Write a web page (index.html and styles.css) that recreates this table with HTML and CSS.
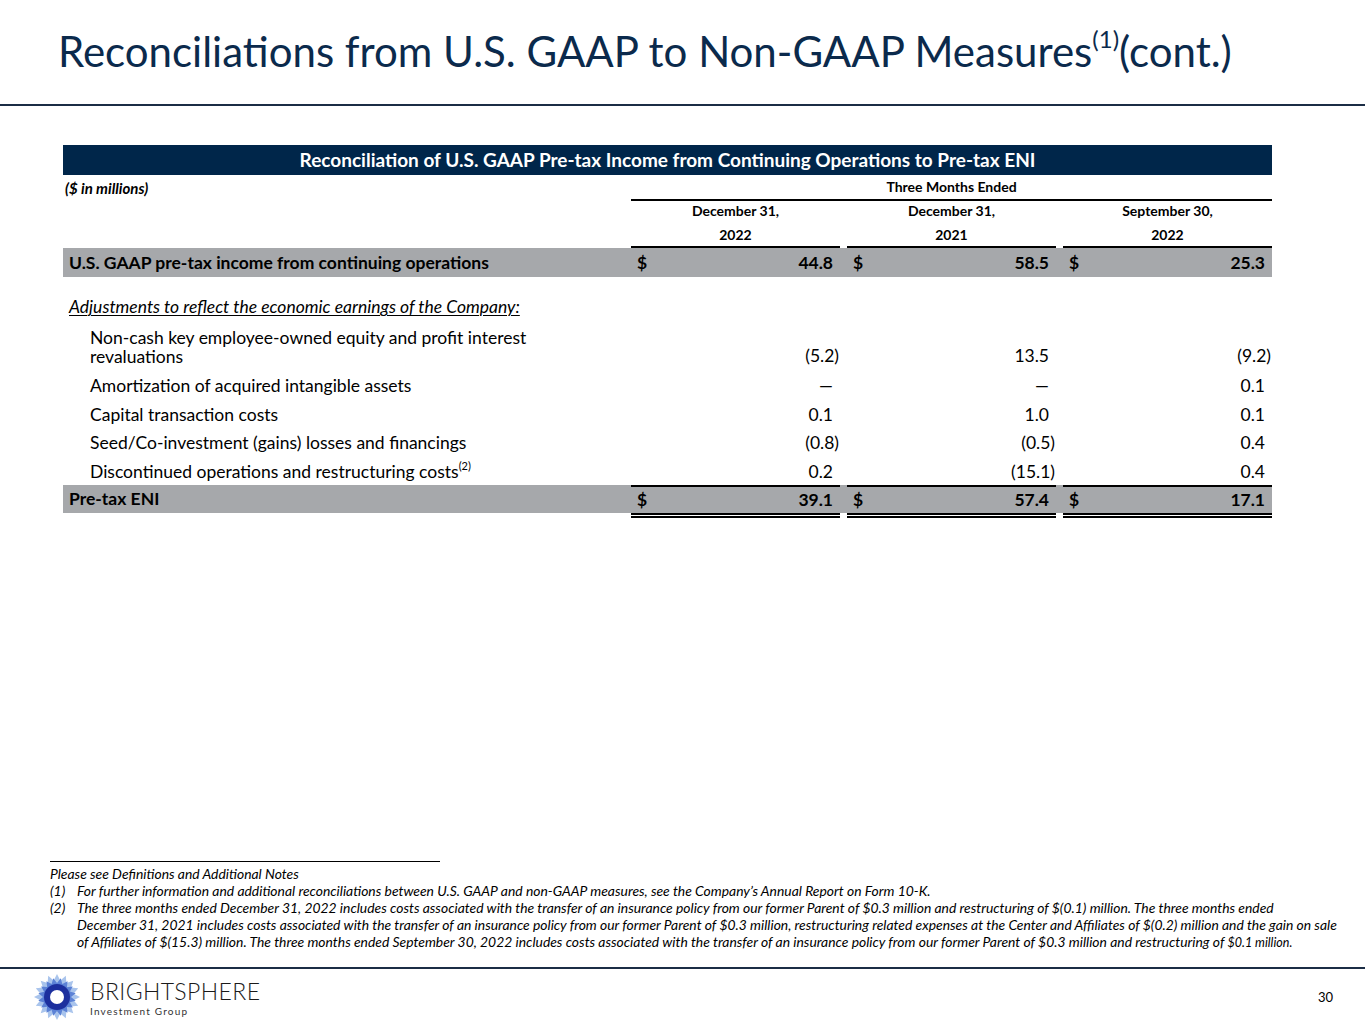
FILE: index.html
```html
<!DOCTYPE html>
<html lang="en">
<head>
<meta charset="utf-8">
<title>Reconciliations from U.S. GAAP to Non-GAAP Measures</title>
<link rel="stylesheet" href="styles.css">
</head>
<body>
<div class="page">
  <header class="title-bar">
    <h1 class="title">Reconciliations from U.S. GAAP to Non-GAAP Measures<sup class="title-sup">(1)</sup>(cont.)</h1>
  </header>

  <section class="recon">
    <div class="recon-head">Reconciliation of U.S. GAAP Pre-tax Income from Continuing Operations to Pre-tax ENI</div>

    <div class="row row-units">
      <div class="units">($ in millions)</div>
      <div class="span3">Three Months Ended</div>
    </div>
    <div class="row row-colhead">
      <div></div>
      <div class="colhead">December 31,</div>
      <div class="colhead">December 31,</div>
      <div class="colhead">September 30,</div>
    </div>
    <div class="row row-colyear">
      <div></div>
      <div class="colyear">2022</div>
      <div class="colyear">2021</div>
      <div class="colyear">2022</div>
    </div>

    <div class="row row-total">
      <div class="label">U.S. GAAP pre-tax income from continuing operations</div>
      <div class="val"><span class="cur">$</span><span class="num">44.8</span></div>
      <div class="val"><span class="cur">$</span><span class="num">58.5</span></div>
      <div class="val"><span class="cur">$</span><span class="num">25.3</span></div>
    </div>

    <div class="row row-sub">
      <div class="label adj">Adjustments to reflect the economic earnings of the Company:</div>
    </div>

    <div class="row row-item row-tall">
      <div class="label indent">Non-cash key employee-owned equity and profit interest<br>revaluations</div>
      <div class="val"><span class="num neg">(5.2)</span></div>
      <div class="val"><span class="num">13.5</span></div>
      <div class="val"><span class="num neg">(9.2)</span></div>
    </div>
    <div class="row row-item">
      <div class="label indent">Amortization of acquired intangible assets</div>
      <div class="val"><span class="num">—</span></div>
      <div class="val"><span class="num">—</span></div>
      <div class="val"><span class="num">0.1</span></div>
    </div>
    <div class="row row-item">
      <div class="label indent">Capital transaction costs</div>
      <div class="val"><span class="num">0.1</span></div>
      <div class="val"><span class="num">1.0</span></div>
      <div class="val"><span class="num">0.1</span></div>
    </div>
    <div class="row row-item">
      <div class="label indent">Seed/Co-investment (gains) losses and financings</div>
      <div class="val"><span class="num neg">(0.8)</span></div>
      <div class="val"><span class="num neg">(0.5)</span></div>
      <div class="val"><span class="num">0.4</span></div>
    </div>
    <div class="row row-item">
      <div class="label indent">Discontinued operations and restructuring costs<sup class="fn-sup">(2)</sup></div>
      <div class="val"><span class="num">0.2</span></div>
      <div class="val"><span class="num neg">(15.1)</span></div>
      <div class="val"><span class="num">0.4</span></div>
    </div>

    <div class="row row-total row-final">
      <div class="label">Pre-tax ENI</div>
      <div class="val"><span class="cur">$</span><span class="num">39.1</span></div>
      <div class="val"><span class="cur">$</span><span class="num">57.4</span></div>
      <div class="val"><span class="cur">$</span><span class="num">17.1</span></div>
    </div>
  </section>

  <section class="notes">
    <div class="notes-rule"></div>
    <p class="note-line">Please see Definitions and Additional Notes</p>
    <div class="note">
      <span class="note-no">(1)</span>
      <span class="note-text">For further information and additional reconciliations between U.S. GAAP and non-GAAP measures, see the Company’s Annual Report on Form 10-K.</span>
    </div>
    <div class="note">
      <span class="note-no">(2)</span>
      <span class="note-text">The three months ended December 31, 2022 includes costs associated with the transfer of an insurance policy from our former Parent of $0.3 million and restructuring of $(0.1) million. The three months ended<br>December 31, 2021 includes costs associated with the transfer of an insurance policy from our former Parent of $0.3 million, restructuring related expenses at the Center and Affiliates of $(0.2) million and the gain on sale<br>of Affiliates of $(15.3) million. The three months ended September 30, 2022 includes costs associated with the transfer of an insurance policy from our former Parent of $0.3 million and restructuring of <span class="tiny">$0.1 million.</span></span>
    </div>
  </section>

  <footer class="footer">
    <div class="brand">
      <svg class="logo" width="46" height="46" viewBox="-23 -23 46 46" aria-hidden="true">
        <polygon fill="#a9c4ec" points="0,-23 3.3,-16.6 8.8,-21.2 9.4,-14.1 16.3,-16.3 14.1,-9.4 21.2,-8.8 16.6,-3.3 23,0 16.6,3.3 21.2,8.8 14.1,9.4 16.3,16.3 9.4,14.1 8.8,21.2 3.3,16.6 0,23 -3.3,16.6 -8.8,21.2 -9.4,14.1 -16.3,16.3 -14.1,9.4 -21.2,8.8 -16.6,3.3 -23,0 -16.6,-3.3 -21.2,-8.8 -14.1,-9.4 -16.3,-16.3 -9.4,-14.1 -8.8,-21.2 -3.3,-16.6"/>
        <polygon fill="#5c82d6" transform="rotate(11.25)" points="0,-19 2.7,-13.7 7.3,-17.6 7.8,-11.6 13.4,-13.4 11.6,-7.8 17.6,-7.3 13.7,-2.7 19,0 13.7,2.7 17.6,7.3 11.6,7.8 13.4,13.4 7.8,11.6 7.3,17.6 2.7,13.7 0,19 -2.7,13.7 -7.3,17.6 -7.8,11.6 -13.4,13.4 -11.6,7.8 -17.6,7.3 -13.7,2.7 -19,0 -13.7,-2.7 -17.6,-7.3 -11.6,-7.8 -13.4,-13.4 -7.8,-11.6 -7.3,-17.6 -2.7,-13.7"/>
        <circle r="13" fill="#1c2f9e"/>
        <circle r="7" fill="#ffffff"/>
      </svg>
      <div class="brand-text">
        <div class="brand-name">BRIGHTSPHERE</div>
        <div class="brand-sub">Investment Group</div>
      </div>
    </div>
    <div class="page-no">30</div>
  </footer>
</div>
</body>
</html>
```

FILE: styles.css
```css
html, body {
  margin: 0;
  padding: 0;
  background: #ffffff;
}

body {
  font-family: "Lato", "Open Sans", sans-serif;
  color: #000000;
}

.page {
  width: 1365px;
  height: 1024px;
  display: flex;
  flex-direction: column;
  overflow: hidden;
}

/* Title */
.title-bar {
  height: 104px;
  border-bottom: 2px solid #1b2d45;
  box-sizing: content-box;
}

.title {
  margin: 0;
  padding: 25px 0 0 58px;
  font-size: 42px;
  line-height: 52px;
  font-weight: 400;
  color: #0b2a4c;
  white-space: nowrap;
}

.title-sup {
  font-size: 24px;
  vertical-align: 0;
  position: relative;
  top: -19px;
  line-height: 0;
}

/* Reconciliation table */
.recon {
  margin: 39px 0 0 63px;
  width: 1209px;
}

.recon-head {
  height: 30px;
  background: #00264a;
  color: #ffffff;
  font-weight: 700;
  font-size: 19px;
  line-height: 30px;
  text-align: center;
}

.row {
  display: grid;
  grid-template-columns: 561px 209px 209px 209px;
  column-gap: 7px;
  align-items: center;
}

.row-units {
  height: 24px;
  font-size: 14px;
  font-weight: 700;
}

.units {
  font-style: italic;
  font-size: 15px;
  padding-left: 2px;
}

.span3 {
  grid-column: 2 / span 3;
  text-align: center;
  align-self: stretch;
  line-height: 24px;
  border-bottom: 2px solid #000000;
}

.row-colhead,
.row-colyear {
  height: 24px;
  font-size: 14px;
  font-weight: 700;
  text-align: center;
}

.row-colyear {
  height: 25px;
}

.colhead,
.colyear {
  align-self: stretch;
  line-height: 24px;
}

.colyear {
  border-bottom: 2px solid #000000;
  line-height: 23px;
}

.row-total {
  height: 29px;
  background: #a6a8ab;
  font-weight: 700;
  font-size: 17.5px;
}

.row-total .label {
  padding-left: 6px;
}

.val {
  display: flex;
  justify-content: space-between;
  align-items: center;
  padding: 0 7px 0 6px;
  font-size: 17.5px;
}

.row-item .val {
  justify-content: flex-end;
}

.neg {
  margin-right: -6px;
}

.row-sub {
  height: 29px;
  margin-top: 15px;
  font-size: 17.5px;
}

.adj {
  font-style: italic;
  text-decoration: underline;
  text-decoration-thickness: 1px;
  text-underline-offset: 2px;
  padding-left: 6px;
}

.row-item {
  height: 28.5px;
  font-size: 17.5px;
}

.row-tall {
  height: 49px;
  align-items: end;
  padding-bottom: 4px;
  box-sizing: border-box;
}

.row-tall .label {
  line-height: 19px;
}

.row-tall + .row-item {
  height: 30px;
}

.indent {
  padding-left: 27px;
}

.fn-sup {
  font-size: 11px;
  line-height: 0;
  vertical-align: 0;
  position: relative;
  top: -8px;
}

.row-final .val {
  align-self: stretch;
  border-top: 2px solid #000000;
  position: relative;
}

.row-final .val::after {
  content: "";
  position: absolute;
  left: 0;
  right: 0;
  bottom: -5px;
  height: 1px;
  border-top: 2px solid #000000;
  border-bottom: 2px solid #000000;
}

.row-final {
  height: 28px;
  margin-top: -1px;
}

.row-total .val {
  align-self: stretch;
}

/* Footnotes */
.notes {
  margin-top: auto;
  padding: 0 0 16px 50px;
  font-size: 13.9px;
  font-style: italic;
  line-height: 17px;
  color: #000000;
}

.notes-rule {
  width: 390px;
  border-top: 1px solid #000000;
  margin-bottom: 3px;
}

.note-line {
  margin: 0;
  white-space: nowrap;
}

.note {
  display: flex;
  white-space: nowrap;
}

.note-no {
  width: 27px;
  flex: none;
}

.tiny {
  font-size: 12.5px;
}

/* Footer */
.footer {
  height: 55px;
  border-top: 2px solid #1b2d45;
  display: flex;
  align-items: center;
  justify-content: space-between;
  padding: 0 32px 0 34px;
}

.brand {
  display: flex;
  align-items: center;
  gap: 10px;
}

.logo {
  display: block;
}

.brand-text {
  display: flex;
  flex-direction: column;
  padding-top: 1px;
}

.brand-name {
  font-size: 23px;
  font-weight: 300;
  letter-spacing: 0.4px;
  line-height: 28px;
  color: #1a1a1a;
}

.brand-sub {
  font-size: 10px;
  letter-spacing: 1.2px;
  line-height: 12px;
  color: #333333;
}

.page-no {
  font-size: 13px;
  color: #000000;
}
```
